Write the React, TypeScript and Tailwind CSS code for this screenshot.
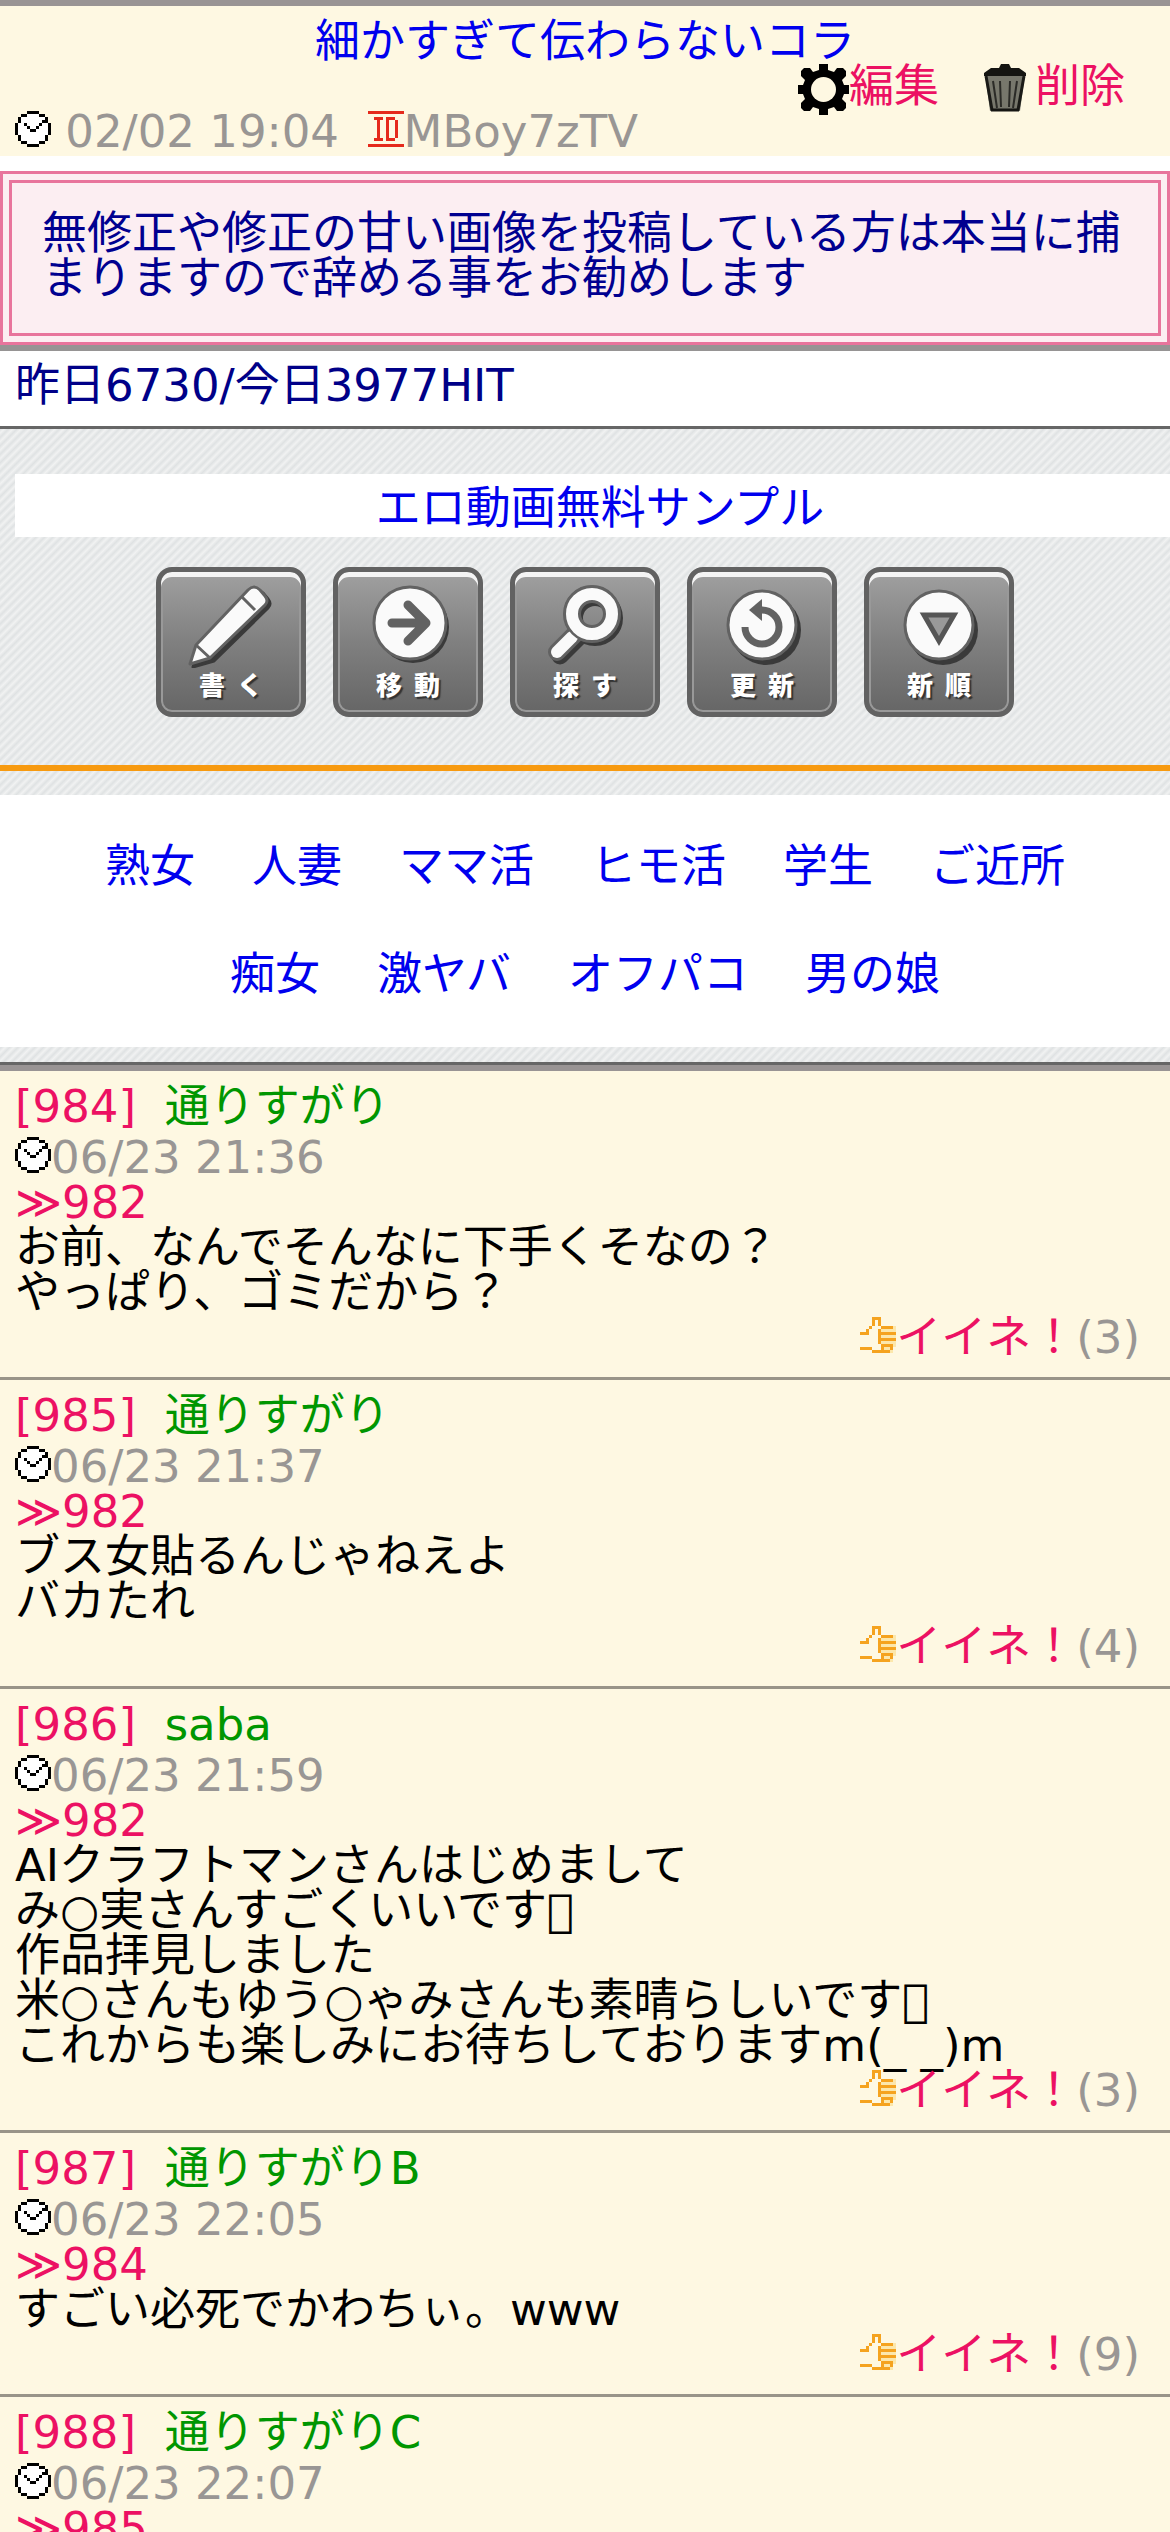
const notice = '無修正や修正の甘い画像を投稿している方は本当に捕まりますので辞める事をお勧めします'

const categoryRows = [
  ['熟女', '人妻', 'ママ活', 'ヒモ活', '学生', 'ご近所'],
  ['痴女', '激ヤバ', 'オフパコ', '男の娘'],
]

const posts = [
  {
    no: 984,
    name: '通りすがり',
    date: '06/23 21:36',
    reply: 982,
    lines: ['お前、なんでそんなに下手くそなの？', 'やっぱり、ゴミだから？'],
    likes: 3,
  },
  {
    no: 985,
    name: '通りすがり',
    date: '06/23 21:37',
    reply: 982,
    lines: ['ブス女貼るんじゃねえよ', 'バカたれ'],
    likes: 4,
  },
  {
    no: 986,
    name: 'saba',
    date: '06/23 21:59',
    reply: 982,
    // \uE757 is a carrier emoji from the private use area
    lines: [
      'AIクラフトマンさんはじめまして',
      'み○実さんすごくいいです\uE757',
      '作品拝見しました',
      '米○さんもゆう○ゃみさんも素晴らしいです\uE757',
      'これからも楽しみにお待ちしておりますm(_ _)m',
    ],
    likes: 3,
  },
  {
    no: 987,
    name: '通りすがりB',
    date: '06/23 22:05',
    reply: 984,
    lines: ['すごい必死でかわちぃ。www'],
    likes: 9,
  },
  {
    no: 988,
    name: '通りすがりC',
    date: '06/23 22:07',
    reply: 985,
    lines: [],
    likes: 0,
  },
]

const menu = [
  { label: '書  く', Icon: PencilIcon },
  { label: '移  動', Icon: ArrowIcon },
  { label: '探  す', Icon: SearchIcon },
  { label: '更  新', Icon: ReloadIcon },
  { label: '新  順', Icon: SortIcon },
]

function App() {
  return (
    <div className="min-h-screen overflow-x-hidden bg-white font-['DejaVu_Sans','Noto_Sans_CJK_JP',sans-serif] text-[45px] leading-[45px] text-black">
      <Header />
      <main>
        <Notice />
        <p className="h-[75px] px-[15px] pt-3 text-[#000088]">昨日6730/今日3977HIT</p>
        <Toolbar />
        <div className="border-t-6 border-[#999494]">
          {posts.map((post) => (
            <Post key={post.no} {...post} />
          ))}
        </div>
      </main>
    </div>
  )
}

function Header() {
  return (
    <header className="border-t-6 border-[#999494] bg-[#fef8e2] pt-[13px]">
      <h1 className="text-center">
        <a href="#thread" className="text-[#0000ee]">細かすぎて伝わらないコラ</a>
      </h1>
      <div className="flex h-[45px] items-start justify-end gap-9 pr-[45px] text-[#ec1163]">
        <a href="#edit" className="flex">
          <GearIcon />
          編集
        </a>
        <a href="#delete" className="flex">
          <TrashIcon />
          削除
        </a>
      </div>
      <p className="flex h-[47px] items-start whitespace-pre px-[15px] text-[#999694]">
        <ClockIcon />
        {' 02/02 19:04  '}
        <IdIcon />
        MBoy7zTV
      </p>
    </header>
  )
}

function Notice() {
  return (
    <div className="mt-[15px] border-b-6 border-[#969494]">
      <div className="border-3 border-[#e8749c] bg-[#fceef2] p-[6px]">
        <p className="border-3 border-[#e8749c] px-[30px] pt-7 pb-8 text-[#000090]">{notice}</p>
      </div>
    </div>
  )
}

function Toolbar() {
  return (
    <nav className="border-y-3 border-[#666666] bg-[#eef0f0] bg-[repeating-linear-gradient(135deg,#dfe2e3_0px,#f1f2f2_3px,#dfe2e3_6px)] pb-[15px]">
      <div className="pt-[45px] pl-[15px]">
        <a href="#sample" className="block bg-white pt-3 pb-[6px] pl-[15px] text-center text-[#0000ee]">
          エロ動画無料サンプル
        </a>
      </div>
      <div className="flex justify-center gap-[27px] pt-[30px] pb-12">
        {menu.map(({ label, Icon }) => (
          <button
            key={label}
            type="button"
            className="flex size-[150px] flex-col items-center rounded-2xl border-5 border-[#626262] bg-linear-to-b from-[#a0a0a0] via-[#808080] to-[#666666] shadow-[inset_0_5px_0_#f4f4f4,inset_0_0_0_2px_#999999]"
          >
            <Icon />
            <span className="whitespace-pre font-['Noto_Sans_CJK_JP',sans-serif] text-[26px] leading-8 font-black text-white [text-shadow:2px_2px_1px_#333333]">
              {label}
            </span>
          </button>
        ))}
      </div>
      <div className="mb-6 h-[6px] bg-[#f79a10]" />
      <div className="flex flex-col gap-[63px] bg-white pt-[49px] pb-[50px]">
        {categoryRows.map((row) => (
          <div key={row[0]} className="flex justify-center gap-[57px]">
            {row.map((name) => (
              <a key={name} href={`#${name}`} className="text-[#0000ee]">
                {name}
              </a>
            ))}
          </div>
        ))}
      </div>
    </nav>
  )
}

function Post({ no, name, date, reply, lines, likes }: (typeof posts)[number]) {
  return (
    <article className="border-b-3 border-[#999488] bg-[#fef8e2] px-[15px] pt-[13px] pb-[17px]">
      <h2 className="whitespace-pre text-[#009600]">
        <a href={`#${no}`} className="text-[#ec1163]">[{no}]</a>
        {'  '}
        {name}
      </h2>
      <p className="mt-[6px] flex items-start text-[#999694]">
        <ClockIcon />
        {date}
      </p>
      <a href={`#${reply}`} className="block text-[#ec1163]">≫{reply}</a>
      {lines.map((line) => (
        <p key={line} className="whitespace-pre">{line}</p>
      ))}
      <p className="flex items-start justify-end pr-[15px] text-[#999694]">
        <button type="button" className="flex items-start text-[#ec1163]">
          <ThumbIcon />
          イイネ！
        </button>
        ({likes})
      </p>
    </article>
  )
}

function ClockIcon() {
  return (
    <svg viewBox="0 0 12 12" shapeRendering="crispEdges" className="mt-[2px] size-9 shrink-0" aria-hidden="true">
      <path fill="#fff" d="M4 1h4v1h2v2h1v4h-1v2H8v1H4v-1H2V8H1V4h1V2h2z" />
      <path
        fill="#000"
        d="M4 0h4v1H4zM2 1h2v1H2zM8 1h2v1H8zM1 2h1v2H1zM10 2h1v2h-1zM0 4h1v4H0zM11 4h1v4h-1zM1 8h1v2H1zM10 8h1v2h-1zM2 10h2v1H2zM8 10h2v1H8zM4 11h4v1H4zM3 4h1v1H3zM4 5h1v1H4zM5 6h2v1H5zM7 5h1v1H7zM8 4h1v1H8zM9 3h1v1H9z"
      />
    </svg>
  )
}

function IdIcon() {
  return (
    <svg viewBox="0 0 12 12" shapeRendering="crispEdges" className="mt-[2px] size-9 shrink-0" aria-hidden="true">
      <path
        fill="#e52a1c"
        d="M0 0h12v1H0zM0 11h12v1H0zM2 2h3v1H2zM3 3h1v6H3zM2 9h3v1H2zM6 2h3v1H6zM6 3h1v6H6zM9 3h1v6H9zM6 9h3v1H6z"
      />
    </svg>
  )
}

function GearIcon() {
  return (
    <svg viewBox="0 0 51 51" className="size-[51px] shrink-0" aria-hidden="true">
      <path
        fill="#000"
        d="M21 0h9v6l6 2 3-4h6l3 3v5l-4 4 2 5h5v9h-5l-2 5 4 4v5l-3 3h-6l-3-4-6 2v6h-9v-6l-6-2-3 4H6l-3-3v-5l4-4-2-5H0v-9h5l2-5-4-4V7l3-3h6l3 4 6-2z"
      />
      <circle cx="25.500" cy="25.500" r="12.500" fill="#fef8e2" />
    </svg>
  )
}

function TrashIcon() {
  return (
    <svg viewBox="0 0 60 51" className="h-[51px] w-[60px] shrink-0" aria-hidden="true">
      <path fill="#77776c" d="M10 10h40l-5 37H15z" />
      <path fill="#151512" d="M9 9l7-5h8l2-4h8l2 4h8l7 5v3H9z" />
      <path stroke="#1a1a17" strokeWidth="3" fill="none" d="M11 12l6 34M49 12l-6 34" />
      <path stroke="#2b2b27" strokeWidth="2" fill="none" d="M18 17l4 27M25 17l1 26M35 17l-1 26M42 17l-4 27" />
      <path stroke="#151512" strokeWidth="3" d="M16 46h28" />
    </svg>
  )
}

function ThumbIcon() {
  return (
    <svg viewBox="0 0 12 12" className="mt-[2px] size-9 shrink-0" aria-hidden="true">
      <path fill="#fce7ab" d="M7 3h5v7h-1v2H7z" />
      <path
        fill="#f5a31f"
        d="M4 0h3v1H4zM4 1h1v2H4zM6 1h1v2H6zM3 3h1v1H3zM7 3h4v1H7zM2 4h1v1H2zM6 4h1v5H6zM0 5h3v1H0zM7 5h5v1H7zM7 7h5v1H7zM7 9h4v1H7zM0 10h4v1H0zM10 10h1v1h-1zM7 10h1v1H7zM4 11h6v1H4z"
      />
    </svg>
  )
}

function PencilIcon() {
  return (
    <svg viewBox="0 0 140 96" className="h-24 w-[140px] shrink-0" aria-hidden="true">
      <path fill="#3a3a3a" stroke="#3a3a3a" strokeWidth="3" strokeLinejoin="round" d="M32 95l6-19 52-55q6-6 12 0l5 6q4 5 0 9L53 89z" />
      <path fill="#fafafa" stroke="#626262" strokeWidth="3" strokeLinejoin="round" d="M29 92l6-19 52-55q6-6 12 0l5 6q4 5 0 9L49 86z" />
      <path stroke="#626262" strokeWidth="3" d="M35 73l14 13M81 25l13 13" />
    </svg>
  )
}

function ArrowIcon() {
  return (
    <svg viewBox="0 0 140 96" className="h-24 w-[140px] shrink-0" aria-hidden="true">
      <circle cx="75" cy="55" r="36" fill="#3a3a3a" />
      <circle cx="72" cy="51" r="36" fill="#fafafa" stroke="#626262" strokeWidth="3" />
      <path fill="none" stroke="#626262" strokeWidth="9" strokeLinecap="round" strokeLinejoin="round" d="M54 51h34M70 33l18 18-18 18" />
    </svg>
  )
}

function SearchIcon() {
  return (
    <svg viewBox="0 0 140 96" className="h-24 w-[140px] shrink-0" aria-hidden="true">
      <g fill="none" stroke="#3a3a3a" transform="translate(3 4)">
        <circle cx="77" cy="42" r="20" strokeWidth="16" />
        <path strokeWidth="17" strokeLinecap="round" d="M60 62L42 80" />
      </g>
      <g fill="none" stroke="#626262">
        <circle cx="77" cy="42" r="20" strokeWidth="18" />
        <path strokeWidth="18" strokeLinecap="round" d="M60 62L42 80" />
      </g>
      <g fill="none" stroke="#fafafa">
        <path strokeWidth="12" strokeLinecap="round" d="M57 65L42 80" />
        <circle cx="77" cy="42" r="20" stroke="#626262" strokeWidth="17" />
        <circle cx="77" cy="42" r="20" strokeWidth="12" />
      </g>
    </svg>
  )
}

function ReloadIcon() {
  return (
    <svg viewBox="0 0 140 96" className="h-24 w-[140px] shrink-0" aria-hidden="true">
      <circle cx="74" cy="58" r="35" fill="#3a3a3a" />
      <circle cx="70" cy="53" r="34" fill="#fafafa" stroke="#626262" strokeWidth="3" />
      <path fill="none" stroke="#626262" strokeWidth="7" d="M53 55a17 17 0 1 0 17-17" />
      <path fill="#626262" d="M57 38l13-11v22z" />
    </svg>
  )
}

function SortIcon() {
  return (
    <svg viewBox="0 0 140 96" className="h-24 w-[140px] shrink-0" aria-hidden="true">
      <circle cx="74" cy="58" r="35" fill="#3a3a3a" />
      <circle cx="70" cy="53" r="34" fill="#fafafa" stroke="#626262" strokeWidth="3" />
      <path fill="#999" stroke="#555" strokeWidth="5" d="M55 43h30L70 69z" />
    </svg>
  )
}

export default App
